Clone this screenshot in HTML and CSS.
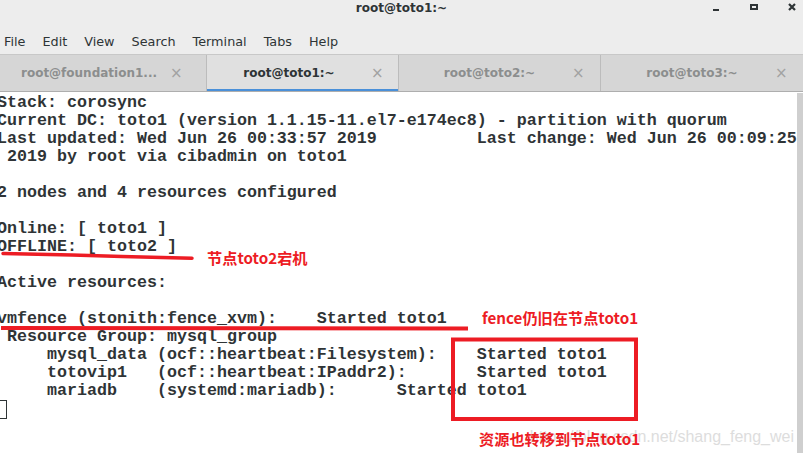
FILE: index.html
```html
<!DOCTYPE html>
<html lang="en">
<head>
<meta charset="UTF-8" />
<title>root@toto1:~</title>
<link rel="stylesheet" href="styles.css">
</head>
<body>
  <div class="titlebar">
    <div></div>
    <div class="title">root@toto1:~</div>
    <div class="controls">
      <svg width="90" height="16" viewBox="0 0 90 16">
        <rect x="0" y="9" width="6" height="2" fill="#2e3436" />
        <rect x="38" y="5" width="6" height="4" fill="none" stroke="#2e3436" stroke-width="2" />
        <path d="M76 4 L82 10 M82 4 L76 10" stroke="#2e3436" stroke-width="2.2" />
      </svg>
    </div>
  </div>

  <div class="menubar">
    <span>File</span>
    <span>Edit</span>
    <span>View</span>
    <span>Search</span>
    <span>Terminal</span>
    <span>Tabs</span>
    <span>Help</span>
  </div>

  <div class="tabbar">
    <div class="tab tab-first"><span class="label">root@foundation1...</span><span class="close">&times;</span></div>
    <div class="tab active"><span class="label">root@toto1:~</span><span class="close">&times;</span></div>
    <div class="tab"><span class="label">root@toto2:~</span><span class="close">&times;</span></div>
    <div class="tab"><span class="label">root@toto3:~</span><span class="close">&times;</span></div>
  </div>

  <div class="terminal">
<pre class="screen">Stack: corosync
Current DC: toto1 (version 1.1.15-11.el7-e174ec8) - partition with quorum
Last updated: Wed Jun 26 00:33:57 2019          Last change: Wed Jun 26 00:09:25
 2019 by root via cibadmin on toto1

2 nodes and 4 resources configured

Online: [ toto1 ]
OFFLINE: [ toto2 ]

Active resources:

vmfence (stonith:fence_xvm):    Started toto1
 Resource Group: mysql_group
     mysql_data (ocf::heartbeat:Filesystem):    Started toto1
     totovip1   (ocf::heartbeat:IPaddr2):       Started toto1
     mariadb    (systemd:mariadb):      Started toto1
<span class="cursor"></span></pre>
    <div class="scrollbar"></div>
  </div>

  <!-- annotations drawn on top of the screenshot -->
  <div class="watermark">https://blog.csdn.net/shang_feng_wei</div>
  <svg class="marks" width="803" height="453" viewBox="0 0 803 453">
    <path d="M3 253.5 L72 255 L122 256.5 L192 258.3" fill="none" stroke="#ed1c24" stroke-width="3.5" stroke-linecap="round" />
    <path d="M1 328 L468 328.5" fill="none" stroke="#ed1c24" stroke-width="4" />
    <rect x="453" y="339.5" width="183" height="79.5" fill="none" stroke="#ed1c24" stroke-width="4" />
  </svg>
  <div class="note note-offline">节点toto2宕机</div>
  <div class="note note-fence">fence仍旧在节点toto1</div>
  <div class="note note-moved">资源也转移到节点toto1</div>
</body>
</html>
```

FILE: styles.css
```css
body {
  margin: 0;
  width: 803px;
  height: 453px;
  overflow: hidden;
  position: relative;
  background: #ffffff;
  font-family: 'DejaVu Sans', 'Noto Sans', sans-serif;
  color: #2e3436;
}

/* Window title */
.titlebar {
  height: 16px;
  display: grid;
  grid-template-columns: 1fr auto 1fr;
  background: #ededed;
}
.title {
  font-size: 12px;
  font-weight: 700;
  line-height: 16px;
}
.controls {
  display: flex;
  justify-content: flex-end;
}

/* Menu bar */
.menubar {
  height: 38px;
  box-sizing: border-box;
  display: flex;
  align-items: flex-end;
  gap: 17px;
  padding: 0 0 5px 4px;
  background: #ededed;
  font-size: 12.8px;
  line-height: 14px;
}

/* Tabs */
.tabbar {
  display: grid;
  grid-template-columns: 206px 192px 202px 1fr;
  height: 36px;
  border-top: 1px solid #c8c8c8;
  border-bottom: 1px solid #aeaeae;
  background: #d6d6d6;
}
.tab {
  display: flex;
  align-items: center;
  padding: 0 18px 0 8px;
  font-size: 12px;
  font-weight: 700;
  color: #8c8e8e;
}
.tab + .tab {
  border-left: 1px solid #bcbcbc;
}
.tab-first {
  padding-right: 26px;
}
.tab.active {
  background: #e0e0e0;
  color: #2e3436;
  padding: 0 17px 0 0;
  box-shadow: inset 0 -2px #4a90d9;
}
.label {
  flex: 1;
  text-align: center;
}
.close {
  width: 10px;
  text-align: center;
  font-weight: 400;
  font-size: 15px;
  color: #a2a2a2;
}

/* Terminal */
.terminal {
  display: flex;
  height: 361px;
  overflow: hidden;
}
.screen {
  flex: 1;
  margin: 0 0 0 -3px;
  padding-top: 2px;
  font-family: 'Liberation Mono', monospace;
  font-size: 16.667px;
  font-weight: 700;
  line-height: 18px;
  color: #2f3436;
  overflow: hidden;
}
.cursor {
  display: inline-block;
  width: 10px;
  height: 19px;
  box-sizing: border-box;
  border: 1px solid #2f3436;
  vertical-align: top;
}
.scrollbar {
  width: 6px;
  margin-top: 1px;
  background: #cfcfcf;
}

/* Red notes and marks */
.marks {
  position: absolute;
  left: 0;
  top: 0;
  pointer-events: none;
}
.watermark {
  position: absolute;
  right: 9px;
  top: 427px;
  font-family: 'Liberation Sans', Arial, sans-serif;
  font-size: 16px;
  line-height: 20px;
  color: #dddddd;
}
.note {
  position: absolute;
  font-family: 'Noto Sans CJK SC', 'Noto Sans', sans-serif;
  font-size: 15.2px;
  font-weight: 700;
  line-height: 20px;
  color: #ed1c24;
  white-space: nowrap;
}
.note-offline {
  left: 207px;
  top: 247px;
}
.note-fence {
  left: 482px;
  top: 307px;
}
.note-moved {
  left: 479px;
  top: 428px;
}
```
